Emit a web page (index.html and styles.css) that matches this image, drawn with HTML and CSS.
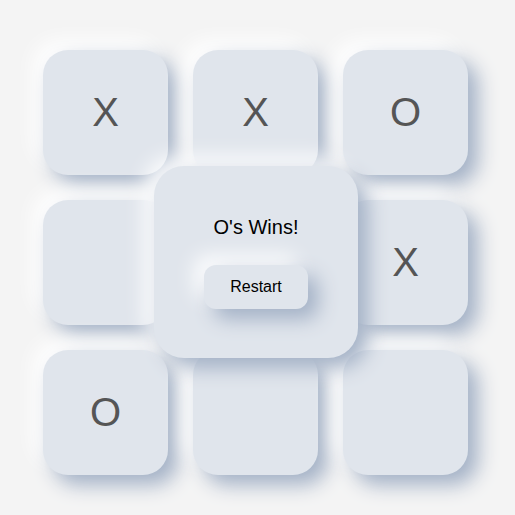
FILE: index.html
```html
<!DOCTYPE html>
<html>
<head>
<meta charset="utf-8">
<link rel="stylesheet" href="styles.css">
</head>
<body>
<div class="board">
  <div class="cell">X</div>
  <div class="cell">X</div>
  <div class="cell">O</div>
  <div class="cell"></div>
  <div class="cell"></div>
  <div class="cell">X</div>
  <div class="cell">O</div>
  <div class="cell"></div>
  <div class="cell"></div>
  <div class="modal">
    <div class="message">O's Wins!</div>
    <button class="restart">Restart</button>
  </div>
</div>
</body>
</html>
```
FILE: styles.css
```css
html, body {
  margin: 0;
  padding: 0;
  background: #f4f4f4;
  font-family: "Liberation Sans", Arial, sans-serif;
}
body {
  width: 515px;
  height: 515px;
  overflow: hidden;
  padding: 50px 0 0 43px;
  box-sizing: border-box;
}
.board {
  position: relative;
  display: grid;
  grid-template-columns: repeat(3, 125px);
  grid-template-rows: repeat(3, 125px);
  gap: 25px;
  width: 425px;
}
.cell {
  background: #e0e5ec;
  border-radius: 25px;
  box-shadow: 10px 10px 20px rgb(163, 177, 198), -10px -10px 20px rgba(255, 255, 255, 0.9);
  display: flex;
  align-items: center;
  justify-content: center;
  font-size: 40px;
  color: #555;
}
.modal {
  position: absolute;
  left: 111px;
  top: 116px;
  width: 204px;
  height: 192px;
  box-sizing: border-box;
  padding: 50px 50px 50px;
  background: #e0e5ec;
  border-radius: 30px;
  box-shadow: 10px 10px 20px rgb(163, 177, 198), -10px -10px 20px rgba(255, 255, 255, 0.9);
  display: flex;
  flex-direction: column;
  align-items: center;
  gap: 26px;
}
.message {
  font-size: 20px;
  line-height: 23px;
  color: #000;
}
.restart {
  font-family: "Liberation Sans", Arial, sans-serif;
  font-size: 16px;
  line-height: 20px;
  color: #000;
  width: 104px;
  height: 44px;
  flex: none;
  padding: 0;
  border: none;
  border-radius: 12px;
  background: #e0e5ec;
  box-shadow: 10px 10px 20px rgb(163, 177, 198), -10px -10px 20px rgba(255, 255, 255, 0.9);
}
```
